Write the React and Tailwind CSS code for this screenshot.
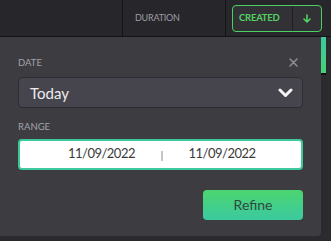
export default function App() {
    return (
        <div className="flex h-[241px] w-[331px] flex-col overflow-hidden bg-[#2a2a2f]" style={{ fontFamily: 'Lato, "Open Sans", sans-serif' }}>
            {/* header row */}
            <div className="flex h-[37px] shrink-0 border-b border-[#141416] bg-[#27272b]">
                <div className="w-[123px] border-r border-[#141416]" />
                <div className="flex w-[103px] items-center border-r border-[#141416] pl-[12px] text-[9px] tracking-tight text-[#9d9da5]">
                    DURATION
                </div>
                <div className="flex flex-1 items-center pl-[6px]">
                    <div className="flex h-[27px] w-[90px] items-stretch rounded-[4px] border border-[#4ccf60] bg-[#323236]">
                        <span className="flex flex-1 items-center pl-[6px] text-[9.5px] font-bold tracking-tight text-[#52d262]">CREATED</span>
                        <span className="flex w-[29px] items-center justify-center border-l border-[#202023]">
                            <svg width="8" height="9" viewBox="0 0 8 9" fill="none" stroke="#52d262" strokeWidth="1.6" strokeLinecap="round" strokeLinejoin="round">
                                <path d="M4 1v7M1 5l3 3 3-3" />
                            </svg>
                        </span>
                    </div>
                </div>
            </div>

            <div className="flex flex-1">
                {/* refine panel */}
                <div className="flex h-[199px] w-[321px] flex-col rounded-br-[4px] bg-[#3c3c41] px-[18px] pt-[19px]">
                    <div className="flex items-end justify-between">
                        <span className="text-[9.5px] text-[#a3a3aa]">DATE</span>
                        <button className="mr-[5px] mb-[3px] text-[#8e8e94]">
                            <svg width="9" height="9" viewBox="0 0 9 9" fill="none" stroke="currentColor" strokeWidth="1.5" strokeLinecap="round">
                                <path d="M1 1l7 7M8 1L1 8" />
                            </svg>
                        </button>
                    </div>
                    <div className="mt-[7px] flex h-[31px] items-center justify-between rounded-[4px] border border-[#2c2c31] bg-[#46454d] pr-[9px] pl-[11px]">
                        <span className="text-[15px] text-[#ececee]">Today</span>
                        <svg width="15" height="10" viewBox="0 0 15 10" fill="none" stroke="#f4f4f6" strokeWidth="3" strokeLinecap="round" strokeLinejoin="round">
                            <path d="M2 2l5.5 5.5L13 2" />
                        </svg>
                    </div>

                    <span className="mt-[12px] text-[9.5px] text-[#a3a3aa]">RANGE</span>
                    <div className="mt-[4px] flex h-[31px] items-center rounded-[4px] border-2 border-[#3ec99c] bg-white text-[13px] tracking-[-0.5px] text-[#3a3a3a]">
                        <span className="w-[115px] text-right">11/09/2022</span>
                        <span className="mx-[26px] mt-[3px] h-[10px] w-[1.5px] bg-[#c4c4c4]" />
                        <span>11/09/2022</span>
                    </div>

                    <div className="mt-[20px] flex justify-end">
                        <button className="h-[30px] w-[100px] rounded-[4px] bg-gradient-to-b from-[#4cd56e] to-[#3cc99f] text-[14px] text-[#2e4a3c]">
                            Refine
                        </button>
                    </div>
                </div>

                {/* scroll indicator */}
                <div className="flex flex-col">
                    <div className="h-[36px] w-[5px] bg-gradient-to-b from-[#3cc99f] to-[#45d275]" />
                    <div className="h-[2px] w-[5px] bg-[#111113]" />
                </div>
            </div>
        </div>
    );
}
